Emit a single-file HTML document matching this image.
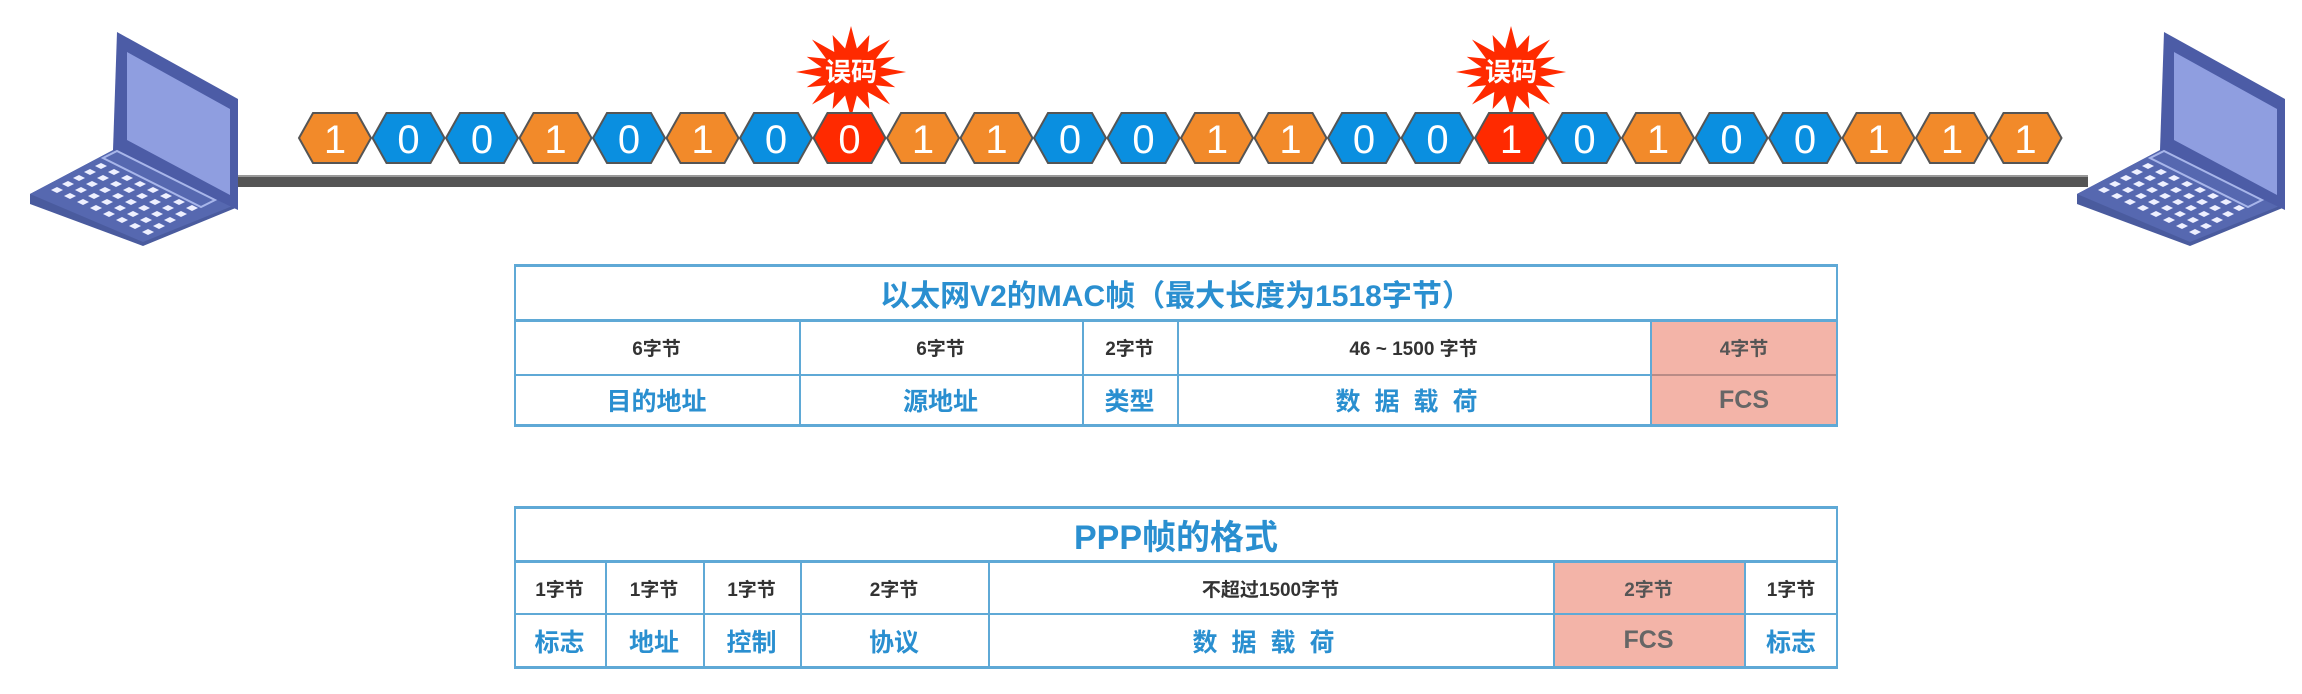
<!DOCTYPE html>
<html><head><meta charset="utf-8"><style>
body{margin:0;width:2302px;height:694px;background:#fff;position:relative;overflow:hidden;font-family:"Liberation Sans","Noto Sans CJK SC",sans-serif}
.c{position:absolute;display:flex;align-items:center;justify-content:center;box-sizing:border-box}
.t{color:#2a8fd0;font-weight:bold;font-size:30px}
.s{color:#333;font-weight:bold;font-size:19px}
.b{color:#2a8fd0;font-weight:bold;font-size:25px}
.p{background:#f3b4a8}
.ln{position:absolute;background:#5fa9d6}
</style></head><body>
<div id="hx"></div>
<script>
var bits="100101001100110010100111",h='<svg width="2302" height="694" style="position:absolute;left:0;top:0">';
h+='<rect x="228" y="175" width="1860" height="12" fill="#555"/><rect x="228" y="175" width="1860" height="2" fill="#999"/>';
function lap(ox){var s='<g transform="translate('+ox+',0)">';
s+='<polygon points="27,194 114,148 235,207 140,246 27,204" fill="#4a5b9e"/>';
s+='<polygon points="27,194 114,148 232,205 140,242" fill="#5668b0"/>';
s+='<polygon points="110,150 114,32 235,99 235,210" fill="#4c5ca6"/>';
s+='<polygon points="124,140 124,52 227,109 227,195" fill="#8f9ee0"/>';
s+='<polygon points="100,158 114,151 212,200 198,207" fill="none" stroke="#a8b6ea" stroke-width="2"/>';
for(var i=0;i<8;i++)for(var j=0;j<5;j++){var x=48+i*13+j*11,y=190+i*6-j*6;
s+='<polygon points="'+x+','+y+' '+(x+6)+','+(y-3)+' '+(x+12)+','+y+' '+(x+6)+','+(y+3)+'" fill="#eef0ff"/>';}
return s+'</g>';}
h+=lap(2050)+lap(3);
function star(cx,cy){var p=[];for(var k=0;k<32;k++){var a=k*Math.PI/16,o=(k%4==0?1.15:1),rx=k%2?30:48*o,ry=k%2?24:40*o;p.push((cx+rx*Math.sin(a)).toFixed(1)+','+(cy-ry*Math.cos(a)).toFixed(1));}
return '<polygon points="'+p.join(' ')+'" fill="#ff2a00"/><text x="'+cx+'" y="'+(cy+9)+'" font-family=\'Noto Sans CJK SC\',sans-serif font-weight="bold" font-size="26" fill="#fff" text-anchor="middle">误码</text>';}
h+=star(851,72)+star(1511,72);
for(var i=0;i<24;i++){var x=299+i*73.5,c=bits[i]=='1'?'#f28a2a':'#0a8fe0';if(i==7||i==16)c='#ff2a00';
h+='<polygon points="'+x+',138 '+(x+14)+',113 '+(x+58)+',113 '+(x+72)+',138 '+(x+58)+',163 '+(x+14)+',163" fill="'+c+'" stroke="#555" stroke-width="2"/>';
h+='<text x="'+(x+36)+'" y="153" font-family="Liberation Sans" font-size="40" fill="#fff" text-anchor="middle">'+bits[i]+'</text>';}
h+='</svg>';document.getElementById('hx').innerHTML=h;
</script>
<!-- table 1 -->
<div class="c p" style="left:1650px;top:322px;width:186px;height:102px"></div>
<div class="ln" style="left:514px;top:264px;width:1324px;height:3px"></div>
<div class="ln" style="left:514px;top:319px;width:1324px;height:3px"></div>
<div class="ln" style="left:514px;top:374px;width:1324px;height:2px"></div>
<div class="ln" style="left:514px;top:424px;width:1324px;height:3px"></div>
<div class="ln" style="left:1650px;top:374px;width:188px;height:2px;background:#b98b86"></div>
<div class="ln" style="left:514px;top:264px;width:2px;height:163px"></div>
<div class="ln" style="left:1836px;top:264px;width:2px;height:163px"></div>
<div class="ln" style="left:799px;top:320px;width:2px;height:106px"></div>
<div class="ln" style="left:1082px;top:320px;width:2px;height:106px"></div>
<div class="ln" style="left:1177px;top:320px;width:2px;height:106px"></div>
<div class="ln" style="left:1650px;top:320px;width:2px;height:106px"></div>
<div class="c t" style="left:514px;top:266px;width:1324px;height:54px">以太网V2的MAC帧（最大长度为1518字节）</div>
<div class="c s" style="left:514px;top:320px;width:285px;height:55px">6字节</div>
<div class="c s" style="left:799px;top:320px;width:283px;height:55px">6字节</div>
<div class="c s" style="left:1082px;top:320px;width:95px;height:55px">2字节</div>
<div class="c s" style="left:1177px;top:320px;width:473px;height:55px">46 ~ 1500 字节</div>
<div class="c s" style="left:1650px;top:320px;width:188px;height:55px;color:#555">4字节</div>
<div class="c b" style="left:514px;top:375px;width:285px;height:50px">目的地址</div>
<div class="c b" style="left:799px;top:375px;width:283px;height:50px">源地址</div>
<div class="c b" style="left:1082px;top:375px;width:95px;height:50px">类型</div>
<div class="c b" style="left:1177px;top:375px;width:473px;height:50px;letter-spacing:14px">数据载荷</div>
<div class="c b" style="left:1650px;top:375px;width:188px;height:50px;color:#666">FCS</div>
<!-- table 2 -->
<div class="c p" style="left:1553px;top:563px;width:191px;height:104px"></div>
<div class="ln" style="left:514px;top:506px;width:1324px;height:3px"></div>
<div class="ln" style="left:514px;top:560px;width:1324px;height:3px"></div>
<div class="ln" style="left:514px;top:613px;width:1324px;height:2px"></div>
<div class="ln" style="left:514px;top:666px;width:1324px;height:3px"></div>
<div class="ln" style="left:514px;top:506px;width:2px;height:163px"></div>
<div class="ln" style="left:1836px;top:506px;width:2px;height:163px"></div>
<div class="ln" style="left:605px;top:561px;width:2px;height:107px"></div>
<div class="ln" style="left:703px;top:561px;width:2px;height:107px"></div>
<div class="ln" style="left:800px;top:561px;width:2px;height:107px"></div>
<div class="ln" style="left:988px;top:561px;width:2px;height:107px"></div>
<div class="ln" style="left:1553px;top:561px;width:2px;height:107px"></div>
<div class="ln" style="left:1744px;top:561px;width:2px;height:107px"></div>
<div class="c t" style="left:514px;top:508px;width:1324px;height:53px;font-size:34px">PPP帧的格式</div>
<div class="c s" style="left:514px;top:562px;width:91px;height:52px">1字节</div>
<div class="c s" style="left:605px;top:562px;width:98px;height:52px">1字节</div>
<div class="c s" style="left:703px;top:562px;width:97px;height:52px">1字节</div>
<div class="c s" style="left:800px;top:562px;width:188px;height:52px">2字节</div>
<div class="c s" style="left:988px;top:562px;width:565px;height:52px">不超过1500字节</div>
<div class="c s" style="left:1553px;top:562px;width:191px;height:52px;color:#555">2字节</div>
<div class="c s" style="left:1744px;top:562px;width:94px;height:52px">1字节</div>
<div class="c b" style="left:514px;top:614px;width:91px;height:53px">标志</div>
<div class="c b" style="left:605px;top:614px;width:98px;height:53px">地址</div>
<div class="c b" style="left:703px;top:614px;width:97px;height:53px">控制</div>
<div class="c b" style="left:800px;top:614px;width:188px;height:53px">协议</div>
<div class="c b" style="left:988px;top:614px;width:565px;height:53px;letter-spacing:14px">数据载荷</div>
<div class="c b" style="left:1553px;top:614px;width:191px;height:53px;color:#666">FCS</div>
<div class="c b" style="left:1744px;top:614px;width:94px;height:53px">标志</div>
</body></html>
